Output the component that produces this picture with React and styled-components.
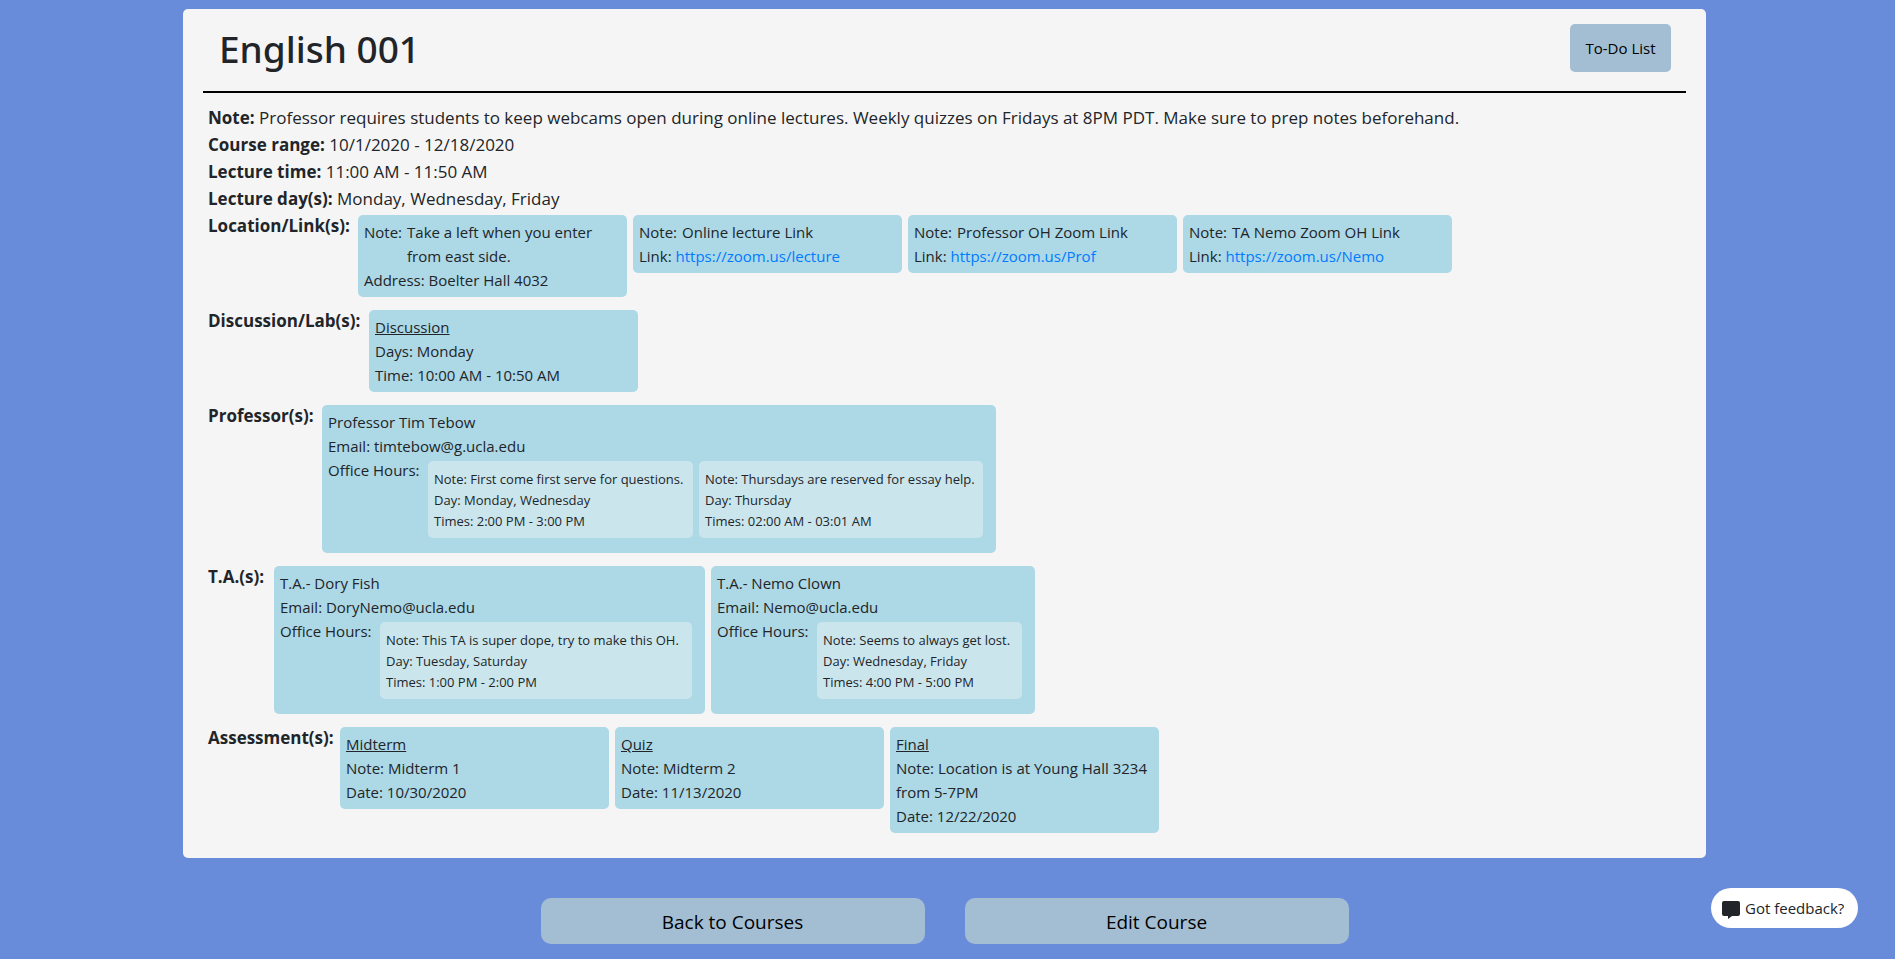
import React from "react";
import styled, { createGlobalStyle } from "styled-components";

const GlobalStyle = createGlobalStyle`
  *, *::before, *::after { box-sizing: border-box; }
  html, body { margin: 0; min-height: 100%; background: #698cda; }
  body {
    font-family: "Open Sans", "Noto Sans", sans-serif;
    font-size: 17px;
    line-height: 27px;
    color: #212529;
  }
`;

const Page = styled.div`
  padding: 9px 189px 14px 183px;
`;

const Panel = styled.main`
  background: #f5f5f5;
  border-radius: 5px;
  padding: 0 20px 15px;
`;

const Header = styled.header`
  display: flex;
  align-items: flex-start;
  justify-content: space-between;
  height: 84px;
  padding: 15px 15px 0 16px;
  border-bottom: 2px solid #000;
`;

const Title = styled.h1`
  margin: 0;
  font-family: "Noto Sans", "Open Sans", sans-serif;
  font-size: 37px;
  font-weight: 500;
  line-height: 50px;
`;

const TodoButton = styled.button`
  width: 101px;
  height: 48px;
  padding: 0;
  border: 0;
  border-radius: 5px;
  background: #a3bed3;
  color: #000;
  font: inherit;
  font-size: 15px;
  cursor: pointer;
`;

const Details = styled.section`
  padding: 11px 5px 0;
`;

const Fact = styled.p`
  margin: 0;
`;

const Row = styled.div`
  display: flex;
  align-items: flex-start;
  margin-bottom: 10px;
`;

const RowLabel = styled.strong`
  flex: none;
  width: ${(p) => p.$width}px;
  white-space: nowrap;
`;

const Cards = styled.div`
  display: flex;
  flex-wrap: wrap;
  align-items: flex-start;
  gap: 6px;
  padding-top: 3px;
`;

const Card = styled.article`
  width: 269px;
  padding: 5px 6px;
  border-radius: 5px;
  background: #add8e6;
  font-size: 15px;
  line-height: 24px;
`;

const PersonCard = styled(Card)`
  width: auto;
  padding: 5px 13px 15px 6px;
`;

const Line = styled.div`
  text-decoration: ${(p) => (p.$underlined ? "underline" : "none")};
`;

const NoteLine = styled.div`
  display: flex;
  gap: 5px;
`;

const CardLink = styled.a`
  color: #007bff;
  text-decoration: none;
`;

const OfficeHours = styled.div`
  display: flex;
  align-items: flex-start;
`;

const HoursLabel = styled.span`
  flex: none;
  width: 100px;
`;

const HoursList = styled.div`
  display: flex;
  gap: 6px;
  padding-top: 3px;
`;

const Hours = styled.div`
  min-width: ${(p) => p.$width}px;
  padding: 8px 6px 6px;
  border-radius: 5px;
  background: #cbe5ed;
  font-size: 13px;
  line-height: 21px;
  white-space: nowrap;
`;

const Actions = styled.nav`
  display: flex;
  justify-content: center;
  gap: 40px;
  margin-top: 40px;
`;

const ActionButton = styled.button`
  width: 384px;
  height: 46px;
  padding: 2px 0 0;
  border: 0;
  border-radius: 10px;
  background: #a3bed3;
  color: #000;
  font: inherit;
  font-size: 19px;
  cursor: pointer;
`;

const Feedback = styled.button`
  position: fixed;
  right: 37px;
  bottom: 31px;
  display: flex;
  align-items: center;
  gap: 5px;
  width: 147px;
  height: 40px;
  padding: 0 11px;
  border: 0;
  border-radius: 20px;
  background: #fff;
  color: #212529;
  font: inherit;
  font-size: 15px;
  white-space: nowrap;
  cursor: pointer;
`;

const BubbleIcon = styled.svg`
  flex: none;
  width: 18px;
  height: 22px;
`;

const facts = [
  ["Note:", "Professor requires students to keep webcams open during online lectures. Weekly quizzes on Fridays at 8PM PDT. Make sure to prep notes beforehand."],
  ["Course range:", "10/1/2020 - 12/18/2020"],
  ["Lecture time:", "11:00 AM - 11:50 AM"],
  ["Lecture day(s):", "Monday, Wednesday, Friday"],
];

const locations = [
  { note: "Take a left when you enter from east side.", address: "Boelter Hall 4032" },
  { note: "Online lecture Link", link: "https://zoom.us/lecture" },
  { note: "Professor OH Zoom Link", link: "https://zoom.us/Prof" },
  { note: "TA Nemo Zoom OH Link", link: "https://zoom.us/Nemo" },
];

const professors = [
  {
    name: "Professor Tim Tebow",
    email: "timtebow@g.ucla.edu",
    hours: [
      { note: "First come first serve for questions.", day: "Monday, Wednesday", times: "2:00 PM - 3:00 PM", width: 265 },
      { note: "Thursdays are reserved for essay help.", day: "Thursday", times: "02:00 AM - 03:01 AM", width: 284 },
    ],
  },
];

const assistants = [
  {
    name: "T.A.- Dory Fish",
    email: "DoryNemo@ucla.edu",
    hours: [{ note: "This TA is super dope, try to make this OH.", day: "Tuesday, Saturday", times: "1:00 PM - 2:00 PM", width: 312 }],
  },
  {
    name: "T.A.- Nemo Clown",
    email: "Nemo@ucla.edu",
    hours: [{ note: "Seems to always get lost.", day: "Wednesday, Friday", times: "4:00 PM - 5:00 PM", width: 205 }],
  },
];

const assessments = [
  { kind: "Midterm", note: "Midterm 1", date: "10/30/2020" },
  { kind: "Quiz", note: "Midterm 2", date: "11/13/2020" },
  { kind: "Final", note: "Location is at Young Hall 3234 from 5-7PM", date: "12/22/2020" },
];

function Section({ label, width, children }) {
  return (
    <Row>
      <RowLabel $width={width}>{label}</RowLabel>
      <Cards>{children}</Cards>
    </Row>
  );
}

function Person({ name, email, hours }) {
  return (
    <PersonCard>
      <Line>{name}</Line>
      <Line>{`Email: ${email}`}</Line>
      <OfficeHours>
        <HoursLabel>Office Hours:</HoursLabel>
        <HoursList>
          {hours.map((h) => (
            <Hours key={h.note} $width={h.width}>
              <Line>{`Note: ${h.note}`}</Line>
              <Line>{`Day: ${h.day}`}</Line>
              <Line>{`Times: ${h.times}`}</Line>
            </Hours>
          ))}
        </HoursList>
      </OfficeHours>
    </PersonCard>
  );
}

export default function App() {
  return (
    <>
      <GlobalStyle />
      <Page>
        <Panel>
          <Header>
            <Title>English 001</Title>
            <TodoButton type="button">To-Do List</TodoButton>
          </Header>
          <Details>
            {facts.map(([label, text]) => (
              <Fact key={label}>
                <strong>{label}</strong> {text}
              </Fact>
            ))}
            <Section label="Location/Link(s):" width={150}>
              {locations.map((l) => (
                <Card key={l.note}>
                  <NoteLine>
                    <span>Note:</span>
                    <span>{l.note}</span>
                  </NoteLine>
                  {l.address && <Line>{`Address: ${l.address}`}</Line>}
                  {l.link && (
                    <Line>
                      Link: <CardLink href={l.link}>{l.link}</CardLink>
                    </Line>
                  )}
                </Card>
              ))}
            </Section>
            <Section label="Discussion/Lab(s):" width={161}>
              <Card>
                <Line $underlined>Discussion</Line>
                <Line>Days: Monday</Line>
                <Line>Time: 10:00 AM - 10:50 AM</Line>
              </Card>
            </Section>
            <Section label="Professor(s):" width={114}>
              {professors.map((p) => (
                <Person key={p.name} {...p} />
              ))}
            </Section>
            <Section label="T.A.(s):" width={66}>
              {assistants.map((p) => (
                <Person key={p.name} {...p} />
              ))}
            </Section>
            <Section label="Assessment(s):" width={132}>
              {assessments.map((a) => (
                <Card key={a.kind}>
                  <Line $underlined>{a.kind}</Line>
                  <Line>{`Note: ${a.note}`}</Line>
                  <Line>{`Date: ${a.date}`}</Line>
                </Card>
              ))}
            </Section>
          </Details>
        </Panel>
        <Actions>
          <ActionButton type="button">Back to Courses</ActionButton>
          <ActionButton type="button">Edit Course</ActionButton>
        </Actions>
      </Page>
      <Feedback type="button">
        <BubbleIcon viewBox="0 -4 18 22" fill="#212529" aria-hidden="true">
          <path d="M2 0h14a2 2 0 0 1 2 2v11a2 2 0 0 1-2 2h-6l-4 3v-3H2a2 2 0 0 1-2-2V2a2 2 0 0 1 2-2z" />
        </BubbleIcon>
        Got feedback?
      </Feedback>
    </>
  );
}
